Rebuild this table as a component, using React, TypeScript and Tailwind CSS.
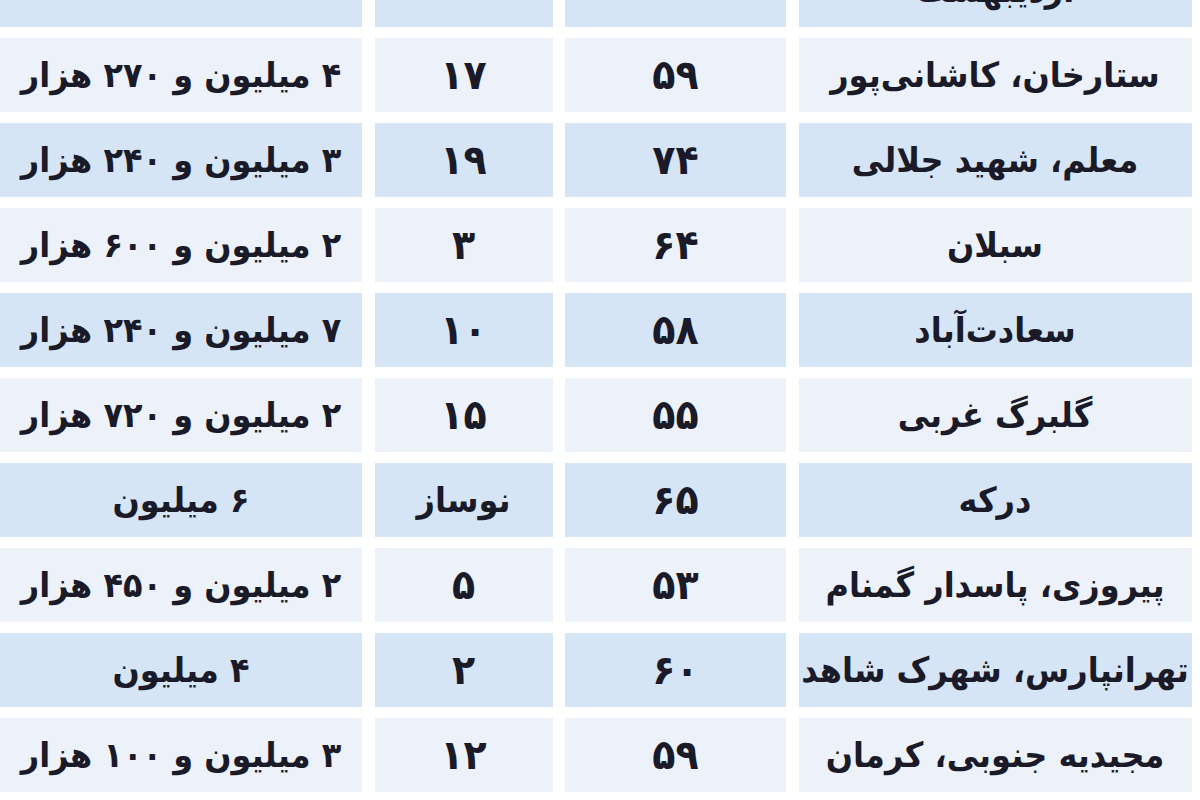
import React from 'react';

type Row = { area: string; size: string; age: string; price: string };

const rows: Row[] = [
  { area: 'ستارخان، کاشانی‌پور', size: '۵۹', age: '۱۷', price: '۴ میلیون و ۲۷۰ هزار' },
  { area: 'معلم، شهید جلالی', size: '۷۴', age: '۱۹', price: '۳ میلیون و ۲۴۰ هزار' },
  { area: 'سبلان', size: '۶۴', age: '۳', price: '۲ میلیون و ۶۰۰ هزار' },
  { area: 'سعادت‌آباد', size: '۵۸', age: '۱۰', price: '۷ میلیون و ۲۴۰ هزار' },
  { area: 'گلبرگ غربی', size: '۵۵', age: '۱۵', price: '۲ میلیون و ۷۲۰ هزار' },
  { area: 'درکه', size: '۶۵', age: 'نوساز', price: '۶ میلیون' },
  { area: 'پیروزی، پاسدار گمنام', size: '۵۳', age: '۵', price: '۲ میلیون و ۴۵۰ هزار' },
  { area: 'تهرانپارس، شهرک شاهد', size: '۶۰', age: '۲', price: '۴ میلیون' },
  { area: 'مجیدیه جنوبی، کرمان', size: '۵۹', age: '۱۲', price: '۳ میلیون و ۱۰۰ هزار' },
];

const isDigits = (s: string) => /^[۰-۹]+$/.test(s);

function Cell({ children, dark }: { children: string; dark: boolean }) {
  return (
    <div
      dir="rtl"
      className={`flex h-[74px] items-center justify-center overflow-hidden whitespace-nowrap ${
        dark ? 'bg-[#d6e5f6]' : 'bg-[#edf2fa]'
      }`}
    >
      <span
        className={`inline-block origin-center scale-y-[1.08] ${
          isDigits(children) ? 'text-[38px]' : 'text-[32px]'
        }`}
      >
        {children}
      </span>
    </div>
  );
}

function TableRow({ row, dark }: { row: Row; dark: boolean }) {
  return (
    <div className="grid grid-cols-[362px_178px_221px_393px] gap-x-[12.5px]">
      <Cell dark={dark}>{row.price}</Cell>
      <Cell dark={dark}>{row.age}</Cell>
      <Cell dark={dark}>{row.size}</Cell>
      <Cell dark={dark}>{row.area}</Cell>
    </div>
  );
}

export default function App() {
  return (
    <div className="h-[800px] w-[1200px] overflow-hidden bg-white">
      <div
        className="-mt-[47px] flex flex-col gap-[11px] font-bold text-[#1a1a28]"
        style={{ fontFamily: '"DejaVu Sans", "Noto Sans", sans-serif' }}
      >
        <TableRow row={{ area: 'اردیبهشت', size: '', age: '', price: '' }} dark />
        {rows.map((r, i) => (
          <TableRow key={i} row={r} dark={i % 2 === 1} />
        ))}
      </div>
    </div>
  );
}
